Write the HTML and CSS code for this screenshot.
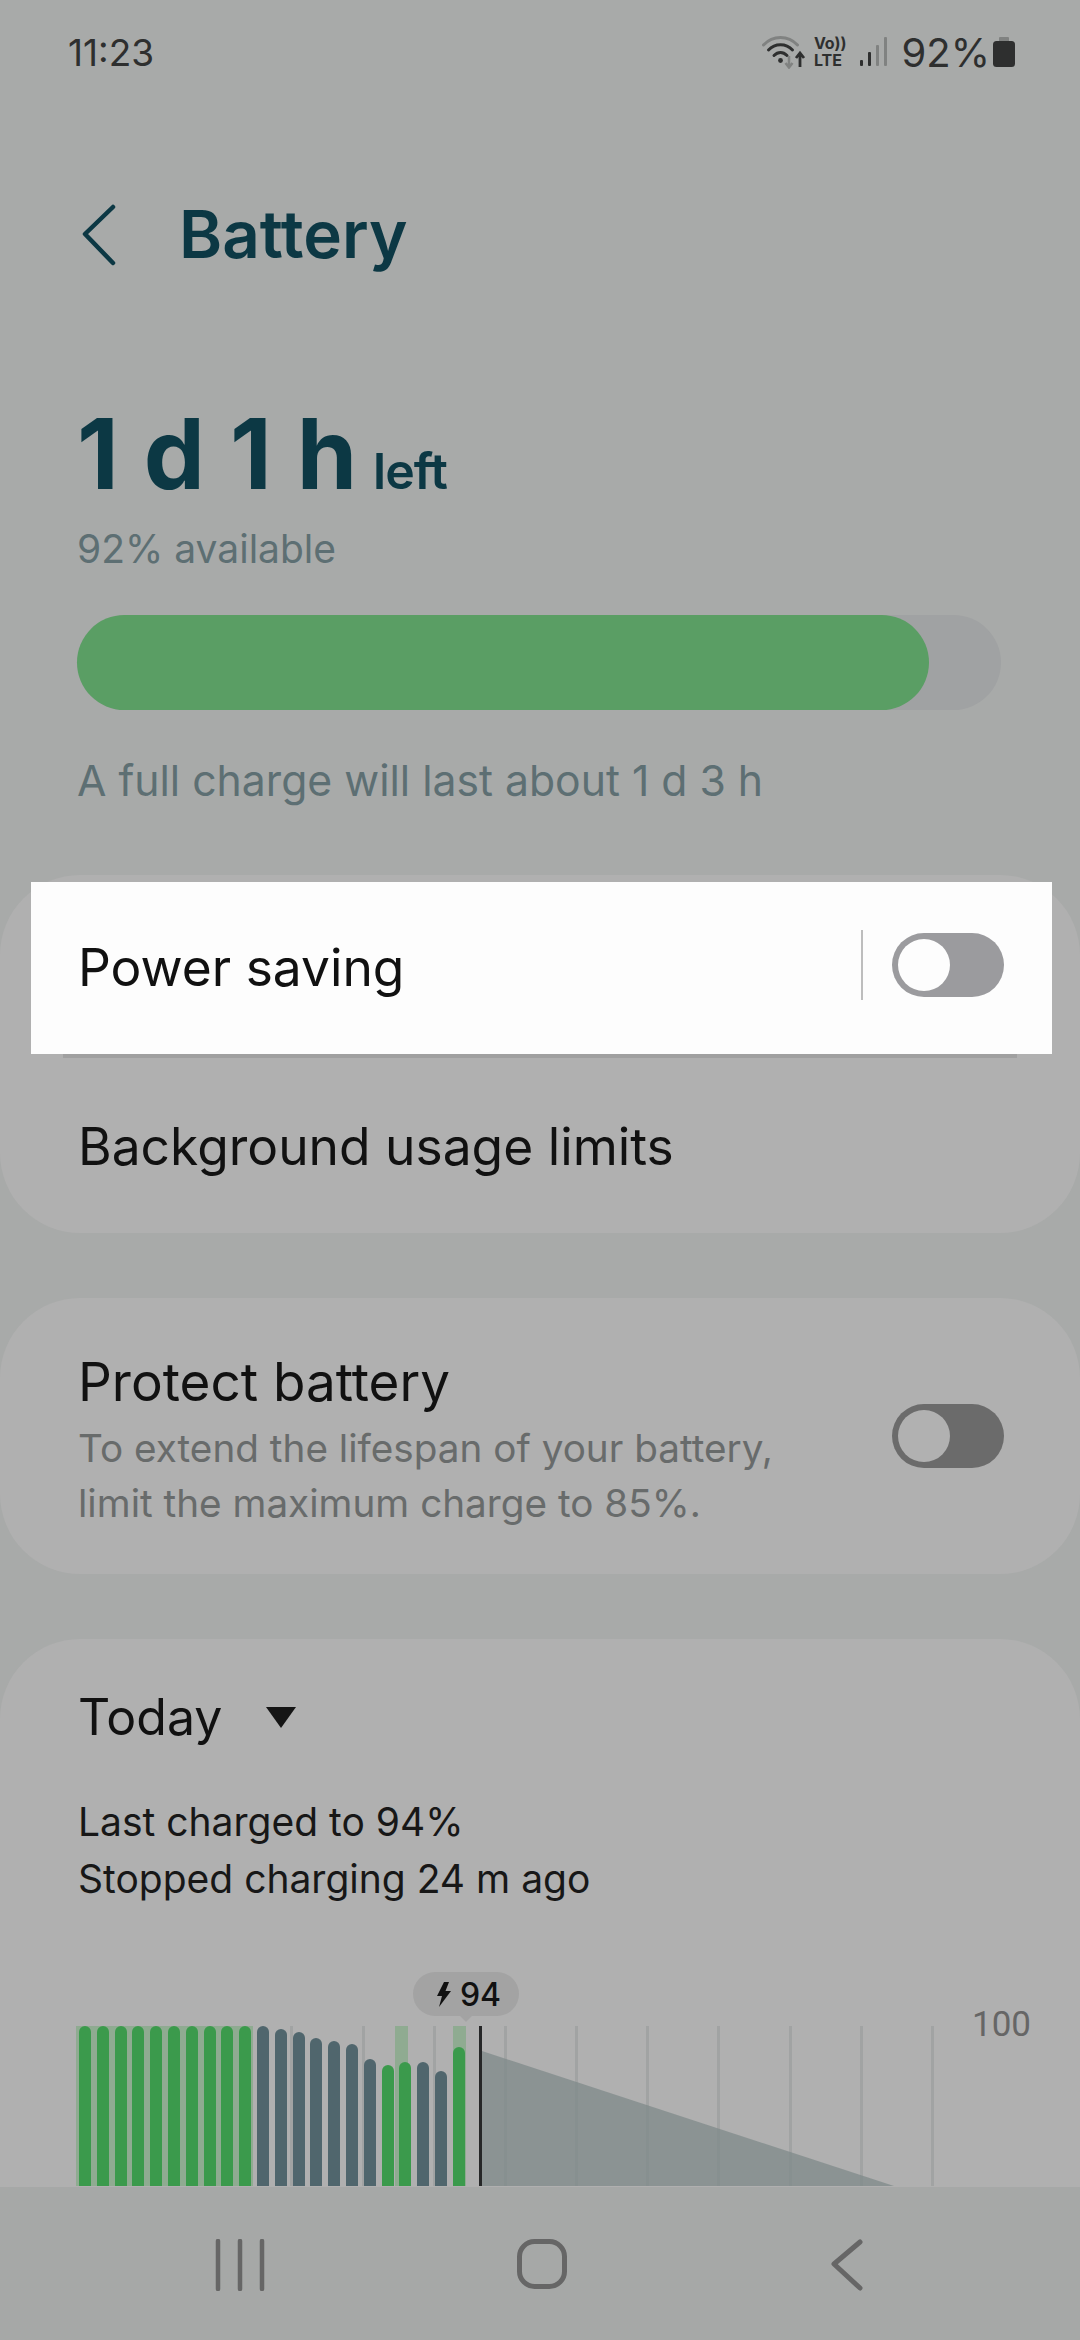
FILE: index.html
```html
<!DOCTYPE html>
<html lang="en">
<head>
    <meta charset="UTF-8">
    <meta name="viewport" content="width=device-width, initial-scale=1.0">
    <title>Battery</title>
    <link rel="stylesheet" href="styles.css">
</head>
<body>

    <!-- Status bar -->
    <div class="status">
        <span class="time">11:23</span>
        <div class="status-icons">
            <svg class="ic-wifi" width="44" height="34" viewBox="0 0 44 34">
                <path d="M1.500 10 C11 0 26 0 35.500 10" fill="none" stroke="#808281" stroke-width="3" stroke-linecap="round"/>
                <path d="M6.500 15 C13 8 24 8 30.500 15" fill="none" stroke="#2e2f2f" stroke-width="3" stroke-linecap="round"/>
                <path d="M12 20.500 C16 16.500 21 16.500 25 20.500" fill="none" stroke="#2e2f2f" stroke-width="3" stroke-linecap="round"/>
                <circle cx="18.500" cy="25.500" r="2.400" fill="#2e2f2f"/>
                <path d="M27 21 V32 M23.500 28 L27 32.500 L30.500 28" fill="none" stroke="#808281" stroke-width="2.500"/>
                <path d="M38 32 V19 M34 23 L38 18 L42 23" fill="none" stroke="#2e2f2f" stroke-width="2.800"/>
            </svg>
            <div class="volte"><span>Vo))</span><span>LTE</span></div>
            <svg class="ic-signal" width="27" height="30" viewBox="0 0 27 30">
                <rect x="0" y="23" width="3" height="6" rx="1" fill="#2e2f2f"/>
                <rect x="8" y="15" width="3" height="14" rx="1" fill="#2e2f2f"/>
                <rect x="16" y="8" width="3" height="21" rx="1" fill="#808281"/>
                <rect x="24" y="0" width="3" height="29" rx="1" fill="#808281"/>
            </svg>
            <span class="pct">92%</span>
            <svg class="ic-batt" width="22" height="30" viewBox="0 0 22 30">
                <rect x="6" y="0" width="10" height="5" rx="1" fill="#808281"/>
                <rect x="0" y="4" width="22" height="26" rx="3.500" fill="#2e2f2f"/>
            </svg>
        </div>
    </div>

    <!-- Title -->
    <div class="appbar">
        <svg class="back" width="34" height="62" viewBox="0 0 34 62">
            <path d="M31 3 L3 30 L31 59" fill="none" stroke="#0c3844" stroke-width="4.500" stroke-linecap="round" stroke-linejoin="round"/>
        </svg>
        <h1 class="title">Battery</h1>
    </div>

    <!-- Battery summary -->
    <div class="summary">
        <div class="left-line"><span class="big">1 d 1 h</span><span class="left-word">left</span></div>
        <p class="avail">92% available</p>
        <div class="meter"><div class="meter-fill" style="width: 92.200%"></div></div>
        <p class="full">A full charge will last about 1 d 3 h</p>
    </div>

    <div class="content">
        <div class="card card-settings">
            <div class="row row-active">
                <span class="row-text">Power saving</span>
                <span class="sep"></span>
                <span class="toggle toggle-light"><span class="thumb"></span></span>
            </div>
            <div class="divider"></div>
            <div class="row row-plain">
                <span class="row-text">Background usage limits</span>
            </div>
        </div>

        <div class="card card-protect">
            <div class="protect-text">
                <div class="row-text protect-title">Protect battery</div>
                <p class="protect-sub">To extend the lifespan of your battery,<br>limit the maximum charge to 85%.</p>
            </div>
            <span class="toggle toggle-dark"><span class="thumb"></span></span>
        </div>

        <div class="card card-usage">
            <div class="today">
                <span class="row-text today-text">Today</span>
                <span class="caret"></span>
            </div>
            <p class="charged">Last charged to 94%<br>Stopped charging 24 m ago</p>

            <div class="chart">
                <div class="pill">
                    <svg width="16" height="25" viewBox="0 0 16 25"><path d="M8 0 L1 14 H6 L3 25 L15 9 H9.500 L13 0 Z" fill="#111"/></svg>
                    <span>94</span>
                </div>
                <span class="axis-label">100</span>

                <div class="grid">
                    <i></i><i></i><i></i><i></i><i></i><i></i><i></i><i></i><i></i><i></i><i></i><i></i><i></i>
                </div>
                <svg class="forecast" width="412" height="135" viewBox="0 0 412 135"><path d="M0 0 L412 135 H0 Z" fill="#7f8a89" fill-opacity="0.75"/></svg>
                <span class="now"></span>
                <div class="charge-shade shade-a"></div>
                <div class="charge-shade shade-b"></div>
                <div class="charge-shade shade-c"></div>

                <div class="bars">
                    <span class="bar g" style="height: 160px"></span>
                    <span class="bar g" style="height: 160px"></span>
                    <span class="bar g" style="height: 160px"></span>
                    <span class="bar g" style="height: 160px"></span>
                    <span class="bar g" style="height: 160px"></span>
                    <span class="bar g" style="height: 160px"></span>
                    <span class="bar g" style="height: 160px"></span>
                    <span class="bar g" style="height: 160px"></span>
                    <span class="bar g" style="height: 160px"></span>
                    <span class="bar g" style="height: 160px"></span>
                    <span class="bar s" style="height: 160px"></span>
                    <span class="bar s" style="height: 157px"></span>
                    <span class="bar s" style="height: 154px"></span>
                    <span class="bar s" style="height: 148px"></span>
                    <span class="bar s" style="height: 145px"></span>
                    <span class="bar s" style="height: 142px"></span>
                    <span class="bar s" style="height: 127px"></span>
                    <span class="bar g" style="height: 121px"></span>
                    <span class="bar g" style="height: 124px"></span>
                    <span class="bar s" style="height: 124px"></span>
                    <span class="bar s" style="height: 115px"></span>
                    <span class="bar g" style="height: 139px"></span>
                </div>
            </div>
        </div>
    </div>

    <!-- Navigation bar -->
    <div class="navbar">
        <svg width="50" height="52" viewBox="0 0 50 52">
            <path d="M3 2 V50 M25 2 V50 M47 2 V50" fill="none" stroke="#666" stroke-width="4.500" stroke-linecap="round"/>
        </svg>
        <svg class="nav-home" width="50" height="50" viewBox="0 0 50 50">
            <rect x="2.500" y="2.500" width="45" height="45" rx="15" fill="none" stroke="#666" stroke-width="5"/>
        </svg>
        <svg class="nav-back" width="32" height="52" viewBox="0 0 32 52">
            <path d="M29 3 L3 25 L29 49" fill="none" stroke="#666" stroke-width="5" stroke-linecap="round" stroke-linejoin="round"/>
        </svg>
    </div>

</body>
</html>
```

FILE: styles.css
```css
* {
    box-sizing: border-box;
}

body {
    font-family: Inter, "Liberation Sans", sans-serif;
    background-color: #a8aaa9;
    margin: 0;
    width: 1080px;
    height: 2340px;
    overflow: hidden;
    display: flex;
    flex-direction: column;
    color: #111;
}

h1, p {
    margin: 0;
    font-weight: normal;
}

/* status bar */
.status {
    height: 104px;
    flex: none;
    padding: 0 65px 0 68px;
    display: flex;
    justify-content: space-between;
    align-items: center;
    color: #2e2f2f;
}

.time {
    font-size: 37px;
}

.status-icons {
    display: flex;
    align-items: center;
}

.volte {
    display: flex;
    flex-direction: column;
    margin-left: 8px;
    font-size: 16px;
    line-height: 17px;
    font-weight: 700;
}

.ic-signal {
    margin-left: 13px;
}

.pct {
    font-size: 40px;
    margin-left: 15px;
}

.ic-batt {
    margin-left: 3px;
}

/* title */
.appbar {
    height: 137px;
    flex: none;
    margin-top: 62px;
    padding-left: 82px;
    display: flex;
    align-items: center;
    color: #0c3844;
}

.title {
    font-size: 65.500px;
    font-weight: 600;
    margin-left: 63px;
}

/* summary */
.summary {
    height: 572px;
    flex: none;
    padding: 0 77px;
    color: #0c3844;
}

.left-line {
    padding-top: 111px;
    line-height: 80px;
    white-space: nowrap;
}

.big {
    font-size: 97px;
    font-weight: 700;
    word-spacing: 2px;
}

.left-word {
    font-size: 50px;
    font-weight: 600;
    margin-left: 16px;
    letter-spacing: -1px;
}

.avail {
    font-size: 39px;
    line-height: 50px;
    margin-top: 1px;
    color: #5d6f73;
}

.meter {
    width: 924px;
    height: 95px;
    margin-top: 41px;
    border-radius: 48px;
    background: #a0a2a3;
}

.meter-fill {
    height: 100%;
    border-radius: 48px;
    background: #5a9e64;
}

.full {
    font-size: 42.700px;
    line-height: 50px;
    margin-top: 46px;
    color: #5d6f73;
}

/* cards */
.content {
    flex: 1;
    min-height: 0;
    overflow: hidden;
    display: flex;
    flex-direction: column;
    gap: 65px;
}

.card {
    background: #b0b0b0;
    border-radius: 80px;
    flex: none;
}

.card-settings {
    padding-top: 7px;
    height: 358px;
}

.row {
    display: flex;
    align-items: center;
}

.row-text {
    font-size: 51.500px;
    line-height: 60px;
    color: #111;
}

.protect-title {
    font-size: 53px;
}

.today-text {
    font-size: 50px;
}

.row-active {
    height: 172px;
    margin: 0 28px 0 31px;
    padding: 0 48px 6px 47px;
    background: #fdfdfd;
}

.row-active .row-text {
    flex: 1;
    margin-top: 4px;
}

.sep {
    width: 2px;
    height: 70px;
    background: #bdbdbd;
    margin-right: 29px;
}

.divider {
    height: 4px;
    margin: 0 63px;
    background: #a0a0a0;
}

.row-plain {
    height: 175px;
    padding-left: 78px;
}

.toggle {
    display: block;
    width: 112px;
    height: 64px;
    border-radius: 32px;
    padding: 6px;
    flex: none;
}

.thumb {
    display: block;
    width: 52px;
    height: 52px;
    border-radius: 50%;
}

.toggle-light {
    background: #9b9b9e;
}

.toggle-light .thumb {
    background: #fdfdfd;
}

.toggle-dark {
    background: #6b6b6b;
}

.toggle-dark .thumb {
    background: #b1b1b1;
}

.card-protect {
    height: 276px;
    padding: 0 76px 0 78px;
    display: flex;
    justify-content: space-between;
    align-items: center;
}

.protect-text {
    padding-top: 10px;
}

.protect-sub {
    font-size: 38.700px;
    line-height: 55px;
    color: #686b6b;
    margin-top: 9px;
}

.card-usage {
    height: 800px;
    padding: 48px 0 0 78px;
}

.today {
    display: flex;
    align-items: center;
}

.caret {
    width: 0;
    height: 0;
    margin-left: 44px;
    border-left: 15px solid transparent;
    border-right: 15px solid transparent;
    border-top: 21px solid #151515;
}

.charged {
    font-size: 39px;
    line-height: 57px;
    margin-top: 46px;
    color: #171717;
}

/* chart: items sit on the chart's own canvas */
.chart {
    position: relative;
    height: 230px;
    margin: 51px 0 0 -1px;
}

.bars {
    position: absolute;
    left: 2px;
    top: 68px;
    height: 160px;
    display: flex;
    align-items: flex-end;
    gap: 5.800px;
}

.bar {
    display: block;
    width: 12px;
    border-radius: 6px 6px 0 0;
}

.bar.g {
    background: #3b9a4c;
}

.bar.s {
    background: #50666d;
}

.grid {
    position: absolute;
    left: 0;
    top: 68px;
    display: flex;
    gap: 68.170px;
    height: 160px;
}

.grid i {
    display: block;
    width: 3px;
    background: #a1a3a3;
}

.charge-shade {
    position: absolute;
    top: 68px;
    height: 160px;
    background: #8fab91;
}

.shade-a {
    left: -1px;
    width: 177px;
}

.shade-b {
    left: 318px;
    width: 13px;
}

.shade-c {
    left: 376px;
    width: 13px;
}

.forecast {
    position: absolute;
    left: 405px;
    top: 93px;
}

.now {
    position: absolute;
    left: 402px;
    top: 68px;
    width: 3px;
    height: 160px;
    background: #262728;
}

.pill {
    position: absolute;
    left: 336px;
    top: 14px;
    width: 106px;
    height: 44px;
    padding-left: 5px;
    border-radius: 22px;
    background: #a3a3a3;
    display: flex;
    justify-content: center;
    align-items: center;
    gap: 8px;
    font-size: 32px;
    font-weight: 500;
    color: #111;
}

.pill::after {
    content: "";
    position: absolute;
    left: 47px;
    bottom: -6px;
    border-left: 6px solid transparent;
    border-right: 6px solid transparent;
    border-top: 6px solid #a3a3a3;
}

.axis-label {
    position: absolute;
    left: 895px;
    top: 47px;
    font-size: 35px;
    line-height: 40px;
    color: #666;
    font-family: Roboto, sans-serif;
}

/* nav bar */
.navbar {
    height: 153px;
    flex: none;
    background: #a6a8a7;
    display: flex;
    align-items: flex-start;
    padding: 52px 0 0 215px;
}

.nav-home {
    margin-left: 252px;
}

.nav-back {
    margin-left: 264px;
}
```
